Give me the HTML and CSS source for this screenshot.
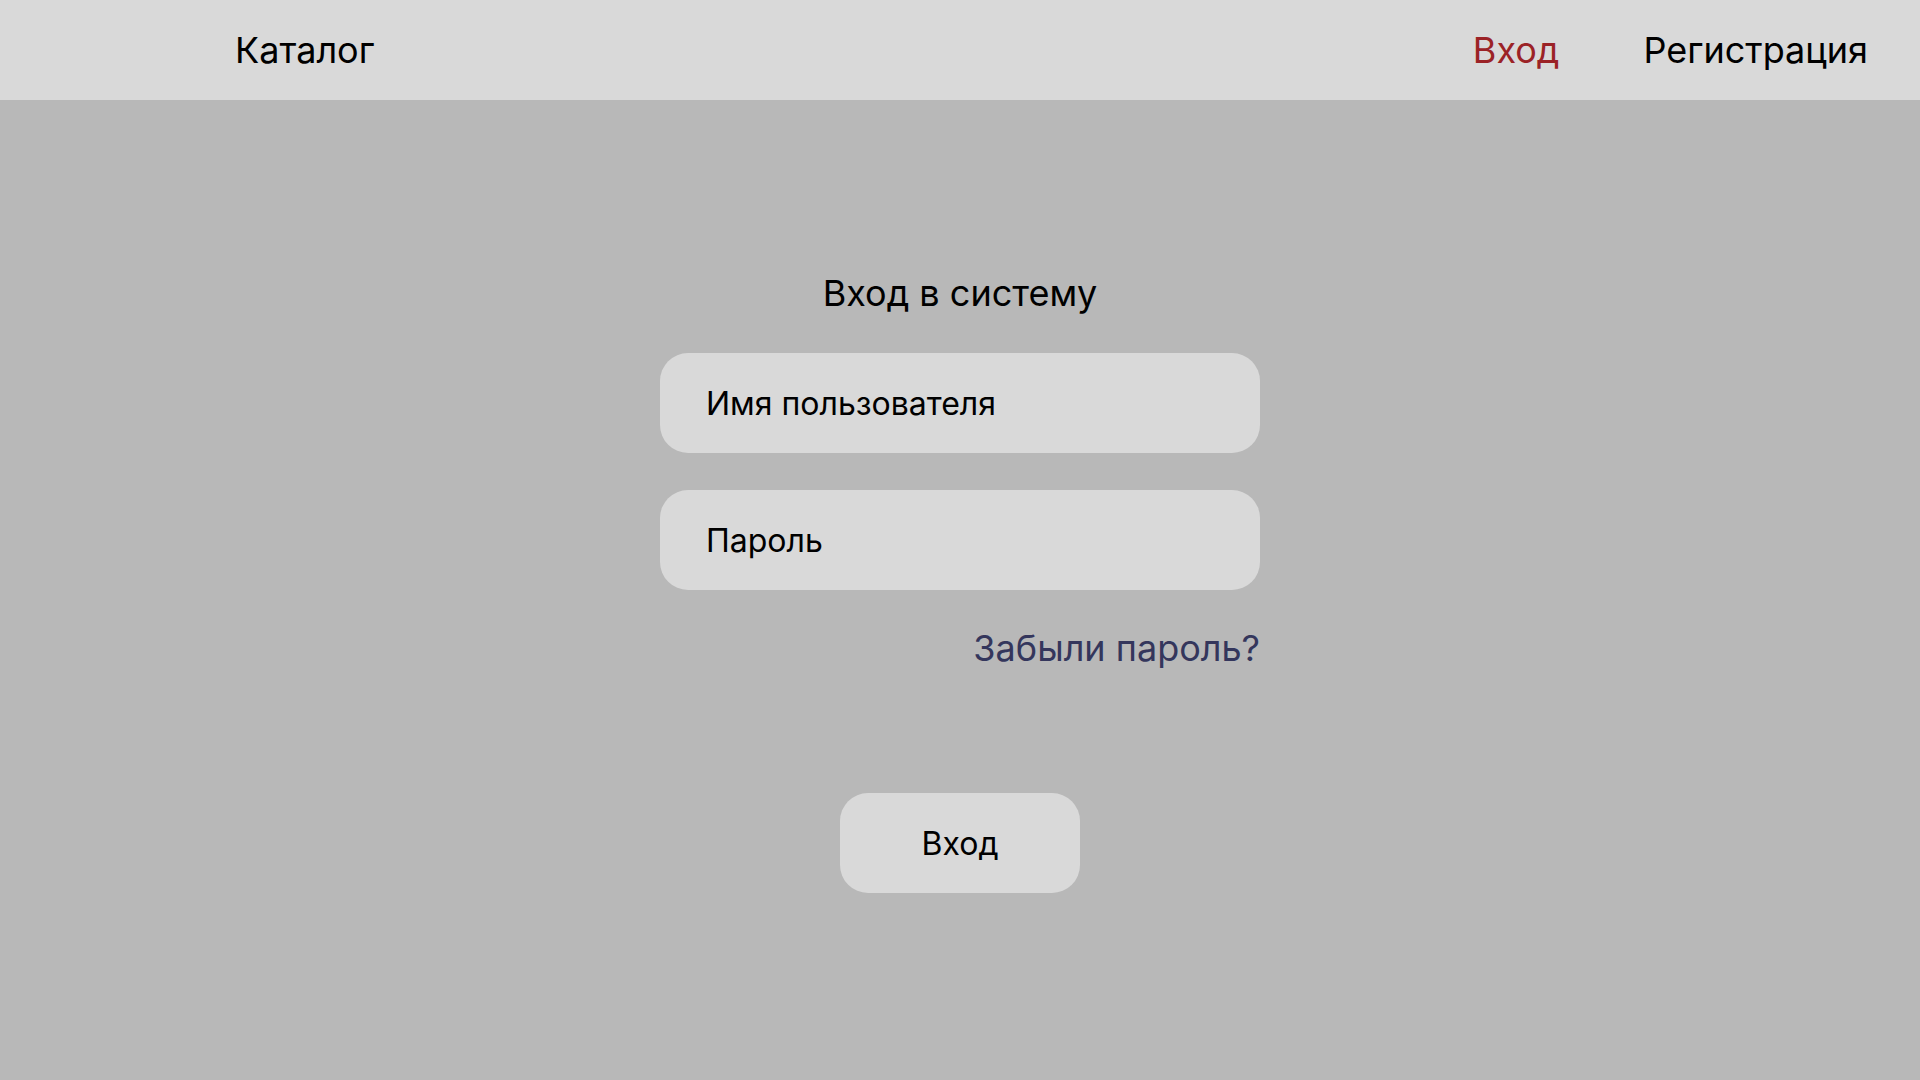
FILE: index.html
```html
<!DOCTYPE html>
<html lang="ru">
<head>
<meta charset="utf-8">
<title>Вход в систему</title>
<link rel="stylesheet" href="styles.css">
</head>
<body>
<header class="topbar">
  <a class="nav-link catalog" href="#">Каталог</a>
  <nav class="nav-right">
    <a class="nav-link active" href="#">Вход</a>
    <a class="nav-link" href="#">Регистрация</a>
  </nav>
</header>
<main class="page">
  <form class="login">
    <h1 class="login-title">Вход в систему</h1>
    <div class="field">Имя пользователя</div>
    <div class="field">Пароль</div>
    <a class="forgot" href="#">Забыли пароль?</a>
    <button class="submit" type="button">Вход</button>
  </form>
</main>
</body>
</html>
```

FILE: styles.css
```css
* { box-sizing: border-box; }
html, body {
  margin: 0;
  padding: 0;
  height: 100%;
}
body {
  font-family: Inter, "Noto Sans", sans-serif;
  background: #b8b8b8;
  color: #000;
  display: flex;
  flex-direction: column;
}
.topbar {
  height: 100px;
  flex: none;
  background: #d9d9d9;
  display: flex;
  align-items: center;
  justify-content: space-between;
  padding: 0 52px 0 235px;
}
.nav-link {
  font-size: 36px;
  line-height: 44px;
  color: #000;
  text-decoration: none;
}
.nav-link.active { color: #9b2226; }
.nav-right {
  display: flex;
  gap: 84px;
}
.page {
  flex: 1;
  display: flex;
  justify-content: center;
  padding-top: 171px;
}
.login {
  width: 600px;
  display: flex;
  flex-direction: column;
  align-items: center;
}
.login-title {
  margin: 0;
  font-size: 36px;
  font-weight: 400;
  line-height: 44px;
}
.field {
  align-self: stretch;
  height: 100px;
  margin-top: 38px;
  border-radius: 28px;
  background: #d9d9d9;
  display: flex;
  align-items: center;
  padding-left: 46px;
  font-size: 32px;
}
.field + .field { margin-top: 37px; }
.forgot {
  align-self: flex-end;
  margin-top: 36px;
  font-size: 36px;
  line-height: 44px;
  color: #34365c;
  text-decoration: none;
}
.submit {
  margin-top: 123px;
  width: 240px;
  height: 100px;
  border: none;
  border-radius: 28px;
  background: #d9d9d9;
  font-family: inherit;
  font-size: 32px;
  color: #000;
  padding: 0;
}
```
